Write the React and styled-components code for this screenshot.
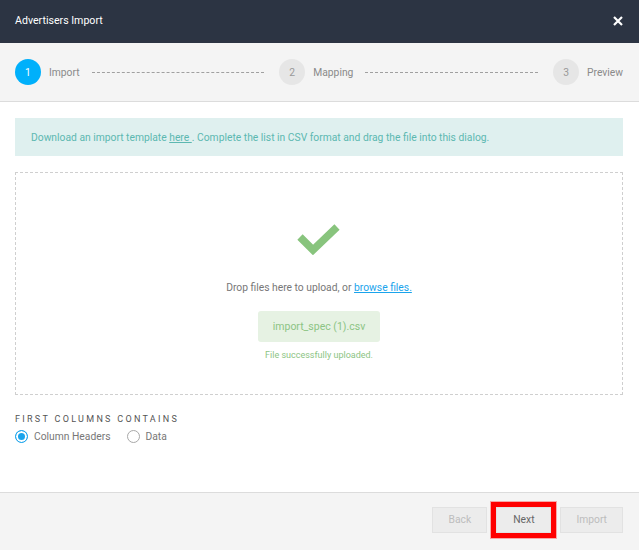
import React, { useState } from 'react'
import styled, { createGlobalStyle } from 'styled-components'

const GlobalStyle = createGlobalStyle`
  html, body {
    margin: 0;
    padding: 0;
    background: #fff;
  }
  body {
    font-family: Roboto, "Liberation Sans", Arial, sans-serif;
  }
  * { box-sizing: border-box; }
`

const steps = [
  { n: 1, label: 'Import' },
  { n: 2, label: 'Mapping' },
  { n: 3, label: 'Preview' },
]

function CheckIcon() {
  return (
    <svg width="44" height="31" viewBox="0 0 44 31">
      <polyline points="3,13 16,26 40,3" fill="none" stroke="#88c47d" strokeWidth="7.5" />
    </svg>
  )
}

function App() {
  const [header, setHeader] = useState(true)

  return (
    <>
      <GlobalStyle />
      <Dialog>
        <Header>
          <Title>Advertisers Import</Title>
          <Close aria-label="close">
            <svg width="10" height="10" viewBox="0 0 10 10">
              <path d="M1 1L9 9M9 1L1 9" stroke="#fff" strokeWidth="2.2" />
            </svg>
          </Close>
        </Header>

        <Stepper>
          {steps.map((s, i) => (
            <React.Fragment key={s.n}>
              <Step>
                <StepCircle active={i === 0}>{s.n}</StepCircle>
                <StepLabel>{s.label}</StepLabel>
              </Step>
              {i < steps.length - 1 && <StepLine />}
            </React.Fragment>
          ))}
        </Stepper>

        <Body>
          <Info>
            Download an import template <a href="#">here </a>. Complete the list in CSV format and drag the file into this dialog.
          </Info>

          <DropZone>
            <CheckIcon />
            <DropText>
              Drop files here to upload, or <a href="#">browse files.</a>
            </DropText>
            <FileChip>import_spec (1).csv</FileChip>
            <Success>File successfully uploaded.</Success>
          </DropZone>

          <FieldLabel>First columns contains</FieldLabel>
          <Radios>
            <RadioOption onClick={() => setHeader(true)}>
              <Radio checked={header} />
              Column Headers
            </RadioOption>
            <RadioOption onClick={() => setHeader(false)}>
              <Radio checked={!header} />
              Data
            </RadioOption>
          </Radios>
        </Body>

        <Footer>
          <Button disabled>Back</Button>
          <Button highlight>Next</Button>
          <Button disabled>Import</Button>
        </Footer>
      </Dialog>
    </>
  )
}

export default App

const Dialog = styled.div`
  width: 639px;
  height: 550px;
  display: flex;
  flex-direction: column;
  background: #fff;
  overflow: hidden;
`

const Header = styled.div`
  height: 43px;
  flex-shrink: 0;
  background: #2c3443;
  display: flex;
  align-items: center;
  justify-content: space-between;
  padding: 0 16px 2px 15px;
`

const Title = styled.div`
  color: #fff;
  font-size: 10.6px;
`

const Close = styled.button`
  background: none;
  border: 0;
  padding: 0;
  display: flex;
  cursor: pointer;
`

const Stepper = styled.div`
  height: 59px;
  flex-shrink: 0;
  background: #f4f4f4;
  border-bottom: 1px solid #dcdcdc;
  display: flex;
  align-items: center;
  padding: 0 16px 0 15px;
`

const Step = styled.div`
  display: flex;
  align-items: center;
  gap: 8px;
`

const StepCircle = styled.div`
  width: 26px;
  height: 26px;
  border-radius: 50%;
  background: ${p => (p.active ? '#00b0fb' : '#e6e6e6')};
  color: ${p => (p.active ? '#fff' : '#999')};
  font-size: 10.3px;
  display: flex;
  align-items: center;
  justify-content: center;
`

const StepLabel = styled.div`
  font-size: 10.3px;
  color: #8a8a8a;
`

const StepLine = styled.div`
  flex: 1;
  border-top: 1px dashed #a0a0a0;
  margin: 0 15px 0 12px;
`

const Body = styled.div`
  flex: 1;
  padding: 16px 16px 0 15px;
  display: flex;
  flex-direction: column;
`

const Info = styled.div`
  background: #dff0ef;
  color: #5cb8b1;
  font-size: 10.3px;
  height: 38px;
  display: flex;
  align-items: center;
  padding: 0 16px;
  white-space: pre;

  a {
    color: #5cb8b1;
    text-decoration: underline;
  }
`

const DropZone = styled.div`
  margin-top: 16px;
  height: 223px;
  border: 1px dashed #cfcfcf;
  display: flex;
  flex-direction: column;
  align-items: center;
  padding-top: 51px;
`

const DropText = styled.div`
  margin-top: 26px;
  font-size: 10.3px;
  color: #777;

  a {
    color: #1aa4ec;
    text-decoration: underline;
  }
`

const FileChip = styled.div`
  margin-top: 17px;
  width: 122px;
  height: 31px;
  border-radius: 3px;
  background: #e6f2e3;
  color: #8cc483;
  font-size: 10.5px;
  display: flex;
  align-items: center;
  justify-content: center;
`

const Success = styled.div`
  margin-top: 8px;
  font-size: 9px;
  color: #8cc483;
`

const FieldLabel = styled.div`
  margin-top: 19px;
  font-size: 9px;
  letter-spacing: 2.3px;
  text-transform: uppercase;
  color: #555;
`

const Radios = styled.div`
  margin-top: 6px;
  display: flex;
  gap: 16px;
`

const RadioOption = styled.label`
  display: flex;
  align-items: center;
  gap: 6px;
  font-size: 10.3px;
  color: #777;
  cursor: pointer;
`

const Radio = styled.span`
  width: 13px;
  height: 13px;
  border-radius: 50%;
  border: 1px solid ${p => (p.checked ? '#1aa4ec' : '#a8a8a8')};
  background: ${p => (p.checked ? '#1aa4ec' : '#fff')};
  box-shadow: ${p => (p.checked ? 'inset 0 0 0 2px #fff' : 'none')};
`

const Footer = styled.div`
  height: 58px;
  flex-shrink: 0;
  background: #f4f4f4;
  border-top: 1px solid #dcdcdc;
  display: flex;
  align-items: center;
  justify-content: flex-end;
  gap: 9px;
  padding: 0 16px 4px 0;
`

const Button = styled.button`
  height: 26px;
  min-width: 55px;
  padding: 0 15px;
  background: #ececec;
  border: 1px solid #e2e2e2;
  font-family: inherit;
  font-size: 10.3px;
  color: ${p => (p.disabled ? '#bdbdbd' : '#666')};
  outline: ${p => (p.highlight ? '5px solid #ff0000' : 'none')};
  outline-offset: 0;
  box-shadow: ${p => (p.highlight ? '0 0 0 6px #f7a8a8' : 'none')};
`
